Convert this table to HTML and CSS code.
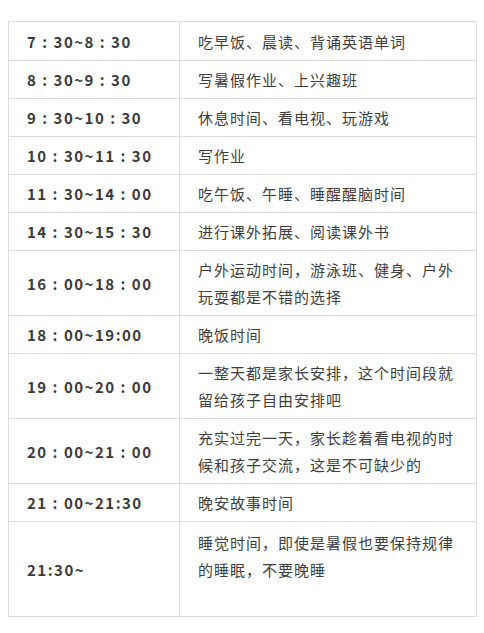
FILE: index.html
```html
<!DOCTYPE html>
<html lang="zh-CN">
<head>
<meta charset="utf-8">
<title>暑假作息时间表</title>
<link rel="stylesheet" href="styles.css">
</head>
<body>
<table class="schedule">
  <colgroup><col class="col-time"><col class="col-desc"></colgroup>
  <tbody>
    <tr><td class="time">7 : 30~8 : 30</td><td class="desc">吃早饭、晨读、背诵英语单词</td></tr>
    <tr><td class="time">8 : 30~9 : 30</td><td class="desc">写暑假作业、上兴趣班</td></tr>
    <tr><td class="time">9 : 30~10 : 30</td><td class="desc">休息时间、看电视、玩游戏</td></tr>
    <tr><td class="time">10 : 30~11 : 30</td><td class="desc">写作业</td></tr>
    <tr><td class="time">11 : 30~14 : 00</td><td class="desc">吃午饭、午睡、睡醒醒脑时间</td></tr>
    <tr><td class="time">14 : 30~15 : 30</td><td class="desc">进行课外拓展、阅读课外书</td></tr>
    <tr><td class="time">16 : 00~18 : 00</td><td class="desc">户外运动时间，游泳班、健身、户外玩耍都是不错的选择</td></tr>
    <tr><td class="time">18 : 00~19:00</td><td class="desc">晚饭时间</td></tr>
    <tr><td class="time">19 : 00~20 : 00</td><td class="desc">一整天都是家长安排，这个时间段就留给孩子自由安排吧</td></tr>
    <tr><td class="time">20 : 00~21 : 00</td><td class="desc">充实过完一天，家长趁着看电视的时候和孩子交流，这是不可缺少的</td></tr>
    <tr><td class="time">21 : 00~21:30</td><td class="desc">晚安故事时间</td></tr>
    <tr class="last"><td class="time">21:30~</td><td class="desc">睡觉时间，即使是暑假也要保持规律的睡眠，不要晚睡<br>&nbsp;</td></tr>
  </tbody>
</table>
</body>
</html>
```

FILE: styles.css
```css
html, body {
  margin: 0;
  padding: 0;
  background: #ffffff;
}

body {
  padding: 21px 7px 0 8px;
  font-family: "Noto Sans CJK SC", "Noto Sans", sans-serif;
  color: #3e3e3e;
}

.schedule {
  width: 469px;
  border-collapse: collapse;
  table-layout: fixed;
}

.col-time {
  width: 171px;
}

.schedule td {
  border: 1px solid #dddddd;
  padding: 5px 10px 5px 18px;
  line-height: 27px;
  vertical-align: middle;
}

.schedule tr:first-child td {
  padding-top: 6px;
}

.schedule .last td {
  padding-top: 7px;
  padding-bottom: 6px;
}

.time {
  font-size: 15px;
  font-weight: bold;
  letter-spacing: 1.5px;
  color: #3a3a3a;
  white-space: nowrap;
}

.desc {
  font-size: 15px;
  letter-spacing: 1px;
  color: #3e3e3e;
}
```
